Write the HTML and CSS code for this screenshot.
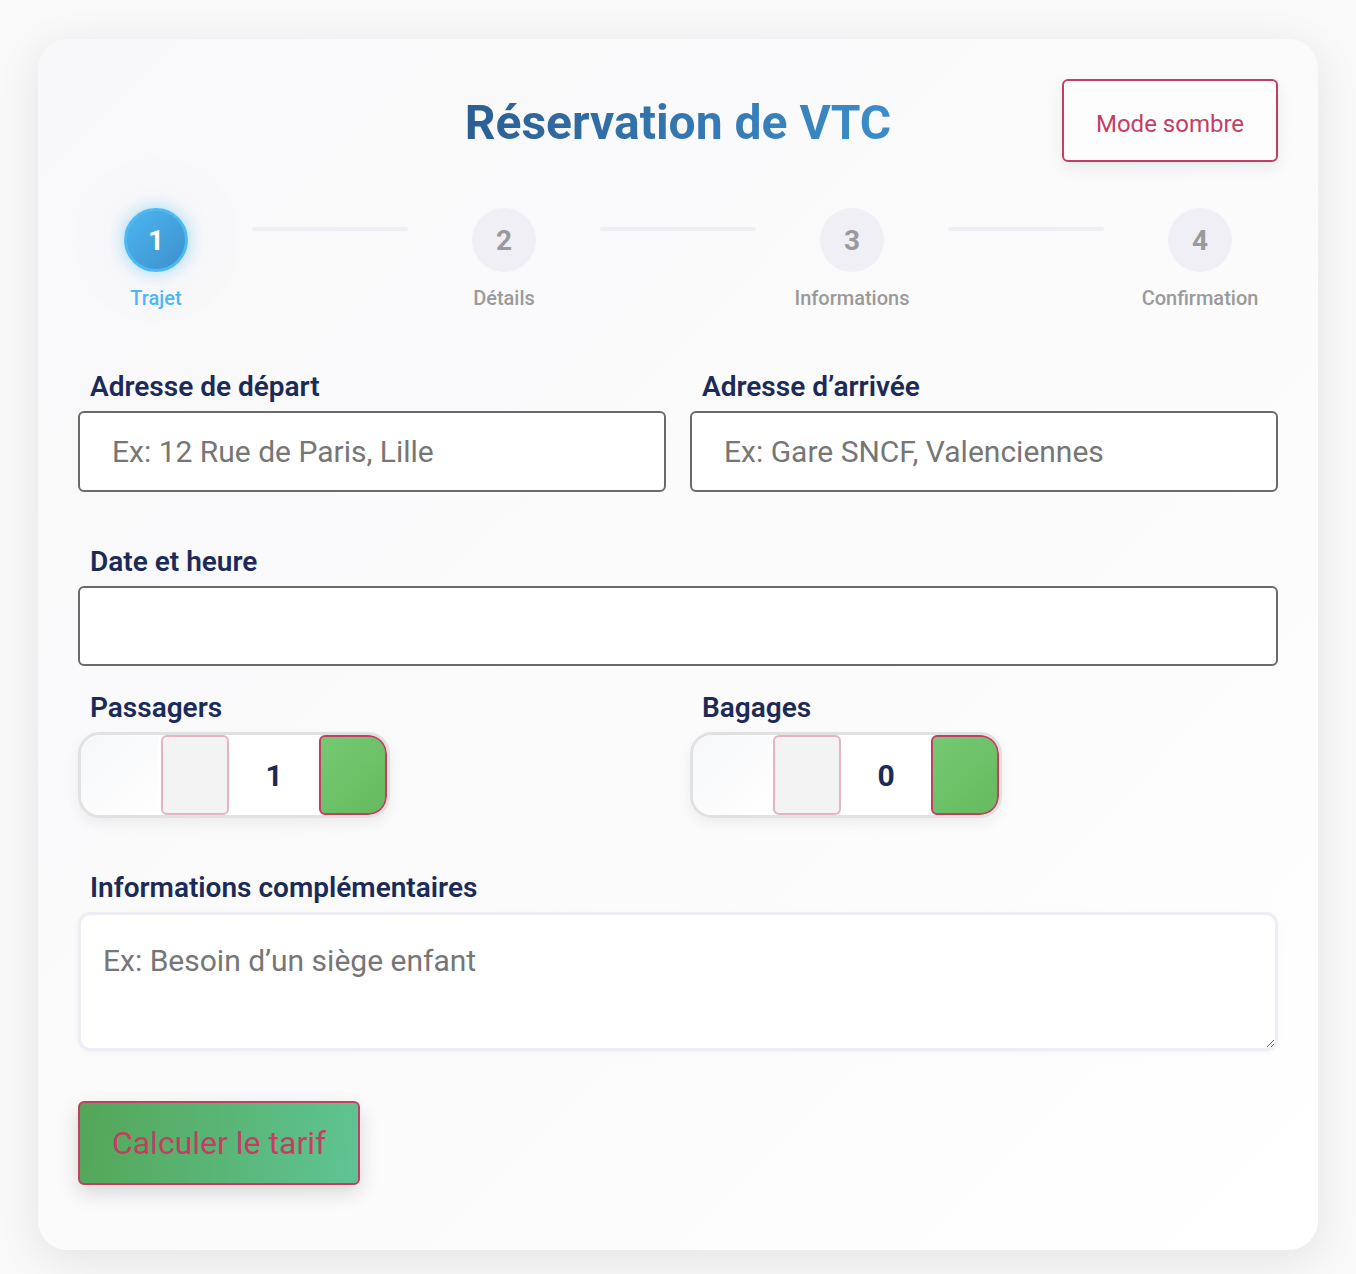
FILE: index.html
```html
<!DOCTYPE html>
<html lang="fr">
<head>
<meta charset="utf-8">
<title>Réservation de VTC</title>
<link rel="stylesheet" href="styles.css">
</head>
<body>
<main class="card">
  <header class="header">
    <div></div>
    <h1 class="title">Réservation de VTC</h1>
    <button class="mode-btn" type="button">Mode sombre</button>
  </header>

  <ol class="steps">
    <li class="step active"><span class="step-circle">1</span><span class="step-label">Trajet</span></li>
    <li class="step-line"></li>
    <li class="step"><span class="step-circle">2</span><span class="step-label">Détails</span></li>
    <li class="step-line"></li>
    <li class="step"><span class="step-circle">3</span><span class="step-label">Informations</span></li>
    <li class="step-line"></li>
    <li class="step"><span class="step-circle">4</span><span class="step-label">Confirmation</span></li>
  </ol>

  <form class="form">
    <div class="row two">
      <div class="field">
        <label class="label" for="dep">Adresse de départ</label>
        <input id="dep" class="input" type="text" placeholder="Ex: 12 Rue de Paris, Lille">
      </div>
      <div class="field">
        <label class="label" for="arr">Adresse d’arrivée</label>
        <input id="arr" class="input" type="text" placeholder="Ex: Gare SNCF, Valenciennes">
      </div>
    </div>

    <div class="row date-row">
      <div class="field">
        <label class="label" for="date">Date et heure</label>
        <input id="date" class="input" type="text">
      </div>
    </div>

    <div class="row two counters-row">
      <div class="field">
        <span class="label">Passagers</span>
        <div class="counter">
          <span class="c-pad"></span>
          <button type="button" class="c-minus" aria-label="moins"></button>
          <span class="c-value">1</span>
          <button type="button" class="c-plus" aria-label="plus"></button>
        </div>
      </div>
      <div class="field">
        <span class="label">Bagages</span>
        <div class="counter">
          <span class="c-pad"></span>
          <button type="button" class="c-minus" aria-label="moins"></button>
          <span class="c-value">0</span>
          <button type="button" class="c-plus" aria-label="plus"></button>
        </div>
      </div>
    </div>

    <div class="row notes-row">
      <div class="field">
        <label class="label" for="notes">Informations complémentaires</label>
        <textarea id="notes" class="textarea" placeholder="Ex: Besoin d’un siège enfant"></textarea>
      </div>
    </div>

    <div class="actions">
      <button type="button" class="submit">Calculer le tarif</button>
    </div>
  </form>
</main>
</body>
</html>
```

FILE: styles.css
```css
* { box-sizing: border-box; }

html, body {
  margin: 0;
  background: #f9f9fa;
  font-family: Roboto, "Liberation Sans", Arial, sans-serif;
}

body {
  padding: 39px 0 24px;
}

.card {
  width: 1280px;
  height: 1211px;
  margin: 0 auto;
  padding: 40px;
  border-radius: 30px;
  background: linear-gradient(135deg, #f8f8fa 0%, #fbfbfc 55%, #ffffff 100%);
  box-shadow: 0 10px 45px rgba(0, 0, 0, 0.09);
}

/* Header */
.header {
  display: grid;
  grid-template-columns: 1fr auto 1fr;
  align-items: center;
  height: 83px;
}

.title {
  margin: 0;
  font-size: 48px;
  font-weight: 700;
  line-height: 1.2;
  padding-top: 4px;
  background: linear-gradient(90deg, #2b5f93 0%, #3c8dcb 100%);
  -webkit-background-clip: text;
  background-clip: text;
  color: transparent;
}

.mode-btn {
  justify-self: end;
  width: 216px;
  height: 83px;
  padding: 6px 0 0;
  border: 2px solid #c43e63;
  border-radius: 6px;
  background: #fdfdfe;
  color: #c43e63;
  font-family: inherit;
  font-size: 24px;
  box-shadow: 0 6px 16px rgba(0, 0, 0, 0.07);
}

/* Steps */
.steps {
  list-style: none;
  margin: 46px 0 0;
  padding: 0;
  display: flex;
  align-items: flex-start;
}

.step {
  width: 156px;
  flex: none;
  display: flex;
  flex-direction: column;
  align-items: center;
}

.step-circle {
  width: 64px;
  height: 64px;
  border-radius: 50%;
  background: #efeff5;
  color: #9a9a9a;
  font-size: 28px;
  font-weight: 700;
  display: flex;
  align-items: center;
  justify-content: center;
}

.step-label {
  margin-top: 14px;
  font-size: 20px;
  font-weight: 500;
  line-height: 24px;
  color: #9a9a9a;
}

.step.active .step-circle {
  background: linear-gradient(135deg, #4cb6ef 0%, #3d90cc 100%);
  border: 3px solid #4fb9f3;
  color: #ffffff;
  box-shadow: 0 0 18px rgba(79, 185, 243, 0.55), 0 0 0 50px rgba(238, 240, 246, 0.08);
}

.step.active .step-label {
  color: #4db7f5;
}

.step-line {
  flex: 1;
  height: 4px;
  margin: 19px 18px 0;
  background: #eeeef4;
  border-radius: 2px;
}

/* Form */
.form {
  margin-top: 61px;
}

.row {
  display: grid;
  grid-template-columns: 1fr;
  gap: 24px;
}

.row.two {
  grid-template-columns: 1fr 1fr;
}

.field {
  display: flex;
  flex-direction: column;
  align-items: flex-start;
  min-width: 0;
}

.label {
  display: block;
  padding-left: 12px;
  margin-bottom: 8px;
  font-size: 28px;
  line-height: 32px;
  font-weight: 600;
  color: #1c2a58;
}

.input {
  width: 100%;
  height: 81px;
  padding: 0 32px;
  border: 2px solid #6a6a6a;
  border-radius: 6px;
  background: #ffffff;
  font-family: inherit;
  font-size: 30px;
  color: #333;
}

.input::placeholder,
.textarea::placeholder {
  color: #767676;
}

.date-row {
  margin-top: 54px;
}

.date-row .input {
  height: 80px;
}

.counters-row {
  margin-top: 26px;
}

/* Counter */
.counter {
  display: flex;
  gap: 3px;
  height: 86px;
  border: 3px solid #e1e1e1;
  border-radius: 22px;
  overflow: hidden;
  background: #ffffff;
  box-shadow: 0 6px 14px rgba(0, 0, 0, 0.06);
}

.c-pad {
  width: 77px;
  background: linear-gradient(135deg, #f6f7f9 0%, #ffffff 100%);
}

.c-minus {
  width: 68px;
  margin: 0;
  padding: 0;
  border: 2px solid #e6b3c1;
  border-radius: 6px;
  background: #f3f3f4;
}

.c-value {
  width: 84px;
  display: flex;
  align-items: center;
  justify-content: center;
  font-size: 30px;
  font-weight: 700;
  color: #1c2a58;
}

.c-plus {
  width: 68px;
  margin: 0;
  padding: 0;
  border: 2px solid #c43e63;
  border-radius: 6px 18px 18px 6px;
  background: linear-gradient(135deg, #76c972 0%, #65ba5f 100%);
}

/* Notes */
.notes-row {
  margin-top: 54px;
}

.textarea {
  width: 100%;
  height: 139px;
  padding: 28px 22px 20px;
  border: 3px solid #ededf5;
  border-radius: 12px;
  background: #ffffff;
  font-family: inherit;
  font-size: 30px;
  line-height: 35px;
  color: #333;
  resize: vertical;
  box-shadow: 0 2px 6px rgba(0, 0, 0, 0.03);
}

/* Submit */
.actions {
  margin-top: 50px;
}

.submit {
  width: 282px;
  height: 84px;
  border: 2px solid #c43e63;
  border-radius: 6px;
  background: linear-gradient(100deg, #54a657 0%, #5fc494 100%);
  color: #c43e63;
  font-family: inherit;
  font-size: 32px;
  box-shadow: 0 8px 20px rgba(0, 0, 0, 0.14);
}
```
